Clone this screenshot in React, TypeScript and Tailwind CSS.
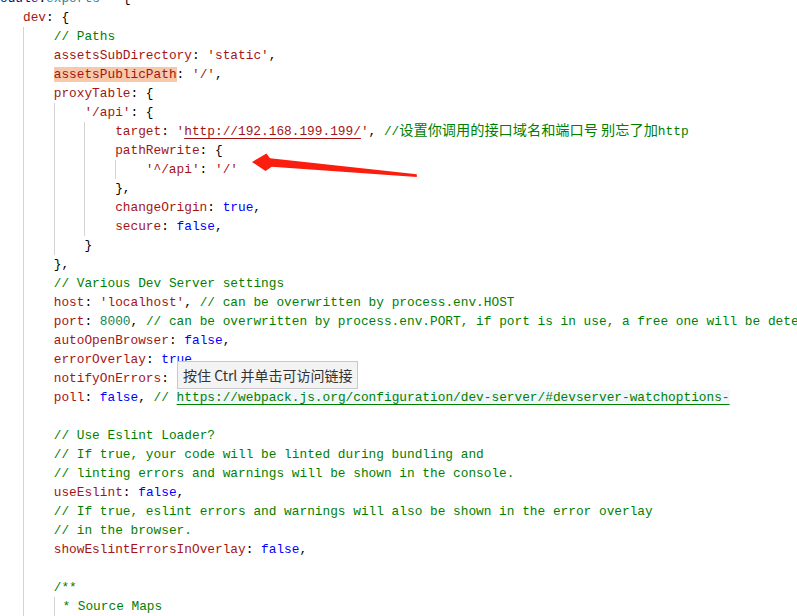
import React from "react";

type Tok = [string, string];
type Line = { indent: number; toks: Tok[]; guideText?: boolean };

const K = "text-[#a31515]";
const S = "text-[#a31515]";
const P = "text-[#000000]";
const CM = "text-[#008000]";
const B = "text-[#0000ff]";
const N = "text-[#098658]";

const lines: Line[] = [
  { indent: 0, toks: [["text-[#001080]", "module"], [P, "."], ["text-[#267f99]", "exports"], [P, " = {"]] },
  { indent: 1, toks: [[K, "dev"], [P, ": {"]] },
  { indent: 2, toks: [[CM, "// Paths"]] },
  { indent: 2, toks: [[K, "assetsSubDirectory"], [P, ": "], [S, "'static'"], [P, ","]] },
  { indent: 2, toks: [["HL", "assetsPublicPath"], [P, ": "], [S, "'/'"], [P, ","]] },
  { indent: 2, toks: [[K, "proxyTable"], [P, ": {"]] },
  { indent: 3, toks: [[S, "'/api'"], [P, ": {"]] },
  { indent: 4, toks: [[K, "target"], [P, ": "], [S, "'"], ["URLRED", "http://192.168.199.199/"], [S, "'"], [P, ", "], [CM, "//"], ["CJK", "设置你调用的接口域名和端口号 别忘了加"], [CM, "http"]] },
  { indent: 4, toks: [[K, "pathRewrite"], [P, ": {"]] },
  { indent: 5, toks: [[S, "'^/api'"], [P, ": "], [S, "'/'"]] },
  { indent: 4, toks: [[P, "},"]] },
  { indent: 4, toks: [[K, "changeOrigin"], [P, ": "], [B, "true"], [P, ","]] },
  { indent: 4, toks: [[K, "secure"], [P, ": "], [B, "false"], [P, ","]] },
  { indent: 3, toks: [[P, "}"]] },
  { indent: 2, toks: [[P, "},"]] },
  { indent: 2, toks: [[CM, "// Various Dev Server settings"]] },
  { indent: 2, toks: [[K, "host"], [P, ": "], [S, "'localhost'"], [P, ", "], [CM, "// can be overwritten by process.env.HOST"]] },
  { indent: 2, toks: [[K, "port"], [P, ": "], [N, "8000"], [P, ", "], [CM, "// can be overwritten by process.env.PORT, if port is in use, a free one will be determined"]] },
  { indent: 2, toks: [[K, "autoOpenBrowser"], [P, ": "], [B, "false"], [P, ","]] },
  { indent: 2, toks: [[K, "errorOverlay"], [P, ": "], [B, "true"], [P, ","]] },
  { indent: 2, toks: [[K, "notifyOnErrors"], [P, ": "], [B, "true"], [P, ","]] },
  { indent: 2, toks: [[K, "poll"], [P, ": "], [B, "false"], [P, ", "], [CM, "// "], ["URLGREEN", "https://webpack.js.org/configuration/dev-server/#devserver-watchoptions-"]] },
  { indent: 2, toks: [] },
  { indent: 2, toks: [[CM, "// Use Eslint Loader?"]] },
  { indent: 2, toks: [[CM, "// If true, your code will be linted during bundling and"]] },
  { indent: 2, toks: [[CM, "// linting errors and warnings will be shown in the console."]] },
  { indent: 2, toks: [[K, "useEslint"], [P, ": "], [B, "false"], [P, ","]] },
  { indent: 2, toks: [[CM, "// If true, eslint errors and warnings will also be shown in the error overlay"]] },
  { indent: 2, toks: [[CM, "// in the browser."]] },
  { indent: 2, toks: [[K, "showEslintErrorsInOverlay"], [P, ": "], [B, "false"], [P, ","]] },
  { indent: 2, toks: [] },
  { indent: 2, toks: [[CM, "/**"]] },
  { indent: 2, toks: [[CM, " * Source Maps"]], guideText: true },
  { indent: 2, toks: [[CM, " */"]], guideText: true },
];

function Token({ t }: { t: Tok }) {
  const [cls, text] = t;
  if (cls === "HL") {
    return <span className="text-[#a31515] bg-[#f7c8aa]">{text}</span>;
  }
  if (cls === "URLRED") {
    return (
      <span className="text-[#a31515] underline decoration-[#a31515] underline-offset-[3px]">{text}</span>
    );
  }
  if (cls === "URLGREEN") {
    return (
      <span className="text-[#008000] bg-[#f1f6fb] underline decoration-[#008000] underline-offset-[3px]">
        {text}
      </span>
    );
  }
  if (cls === "CJK") {
    return (
      <span className="text-[#008000] text-[14.2px] leading-none font-['Noto_Sans_CJK_SC',sans-serif]">{text}</span>
    );
  }
  return <span className={cls}>{text}</span>;
}

export default function App() {
  return (
    <div className="relative w-[797px] h-[616px] overflow-hidden bg-white">
      <div className="mt-[-11.5px] ml-[-7.7px] font-['Liberation_Mono',monospace] text-[12.8px] leading-[19px]">
        {lines.map((ln, idx) => (
          <div key={idx} className="flex h-[19px] whitespace-pre">
            {Array.from({ length: ln.indent }).map((_, i) => (
              <span
                key={i}
                className={
                  i === 0
                    ? "inline-block w-[4ch] shrink-0"
                    : "inline-block w-[4ch] shrink-0 border-l border-[#d3d3d3]"
                }
              />
            ))}
            <span className={ln.guideText ? "border-l border-[#d3d3d3] whitespace-pre" : "whitespace-pre"}>
              {ln.toks.map((t, i) => (
                <Token key={i} t={t} />
              ))}
            </span>
          </div>
        ))}
      </div>

      {/* tooltip */}
      <div className="absolute left-[177px] top-[361px] w-[181px] h-[28px] bg-[#f3f3f3] border border-[#c8c8c8] flex items-center pl-[5px] text-[14px] text-[#333333] font-['Noto_Sans_CJK_SC',sans-serif] whitespace-nowrap">
        按住 Ctrl 并单击可访问链接
      </div>

      {/* red arrow annotation */}
      <svg className="absolute left-0 top-0 pointer-events-none" width="797" height="616">
        <polygon
          points="252,162 266.5,153.5 270,158.3 416.8,174.3 416.8,177 271.7,166.8 265.5,171 "
          fill="#fb1d0d"
        />
      </svg>
    </div>
  );
}
